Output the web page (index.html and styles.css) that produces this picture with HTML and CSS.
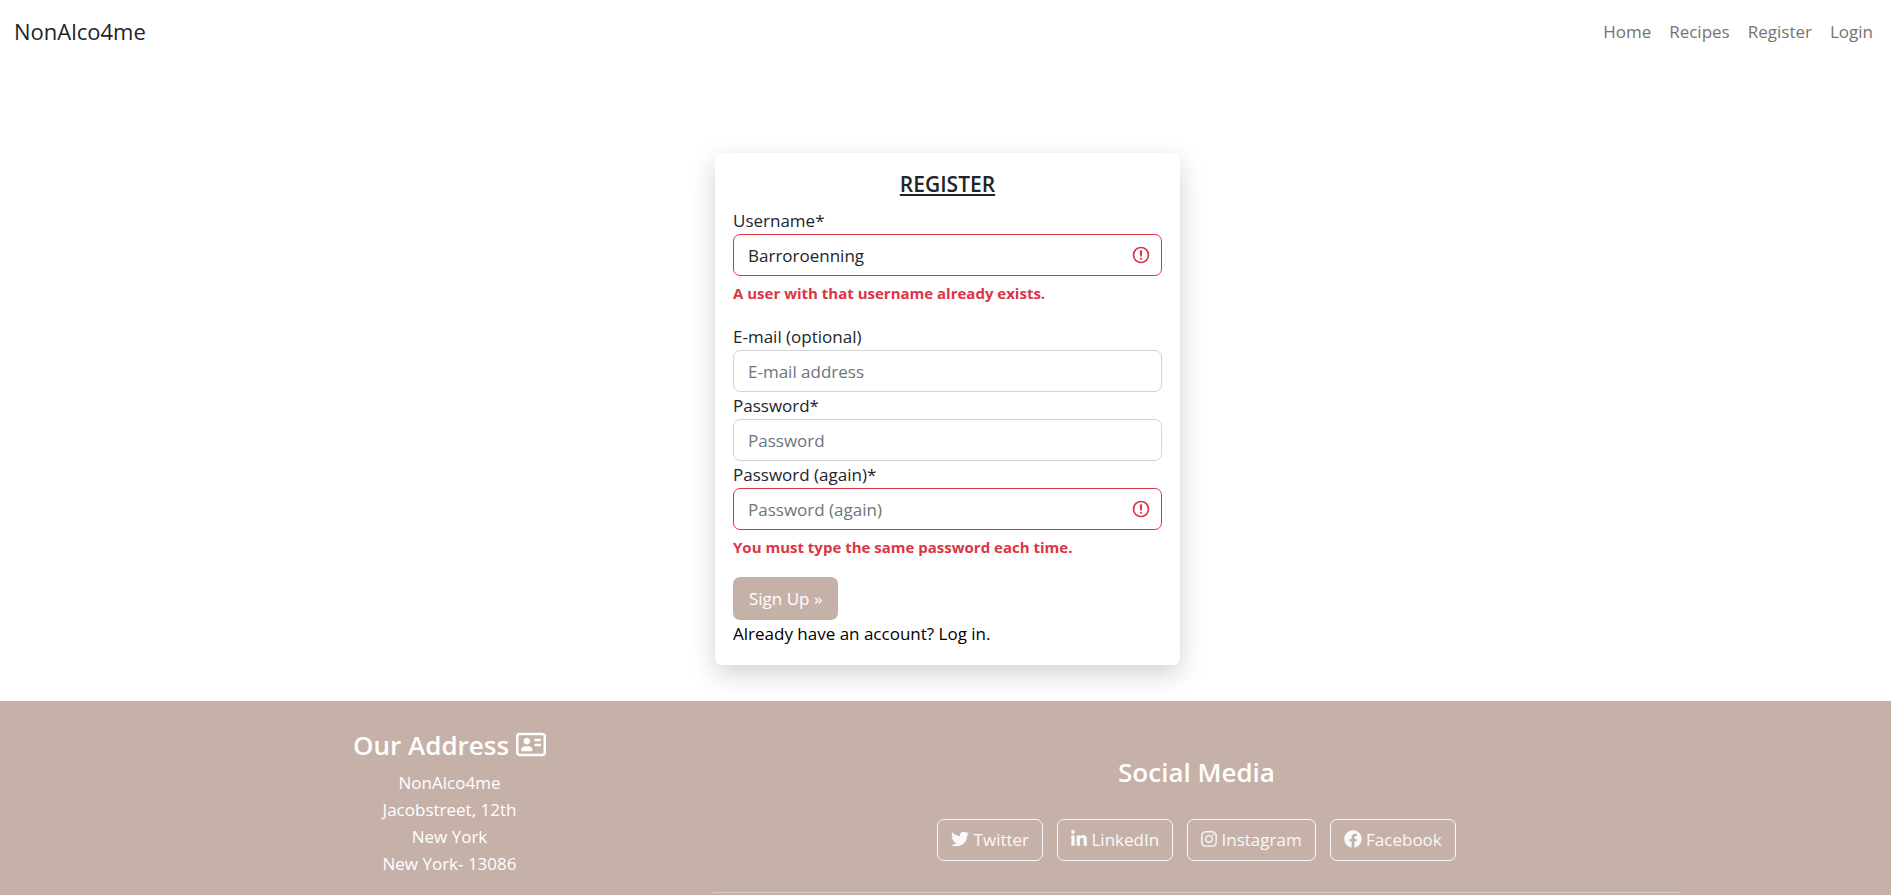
FILE: index.html
```html
<!DOCTYPE html>
<html lang="en">
<head>
<meta charset="utf-8">
<title>NonAlco4me - Register</title>
<link rel="stylesheet" href="styles.css">
</head>
<body>
<header class="navbar">
  <a class="brand" href="#">NonAlco4me</a>
  <nav class="nav-links">
    <a href="#">Home</a>
    <a href="#">Recipes</a>
    <a href="#">Register</a>
    <a href="#">Login</a>
  </nav>
</header>

<main class="main">
  <section class="card">
    <h1 class="card-title">REGISTER</h1>
    <form class="form">
      <div class="field has-error">
        <label for="username">Username*</label>
        <div class="control">
          <input class="invalid" id="username" type="text" value="Barroroenning">
          <svg class="error-icon" viewBox="0 0 12 12" aria-hidden="true"><circle cx="6" cy="6" r="4.5"/><path stroke-linejoin="round" d="M5.8 3.6h.4L6 6.5z"/><circle class="dot" cx="6" cy="8.2" r=".6"/></svg>
        </div>
        <p class="error">A user with that username already exists.</p>
      </div>
      <div class="field">
        <label for="email">E-mail (optional)</label>
        <input id="email" type="email" placeholder="E-mail address">
      </div>
      <div class="field">
        <label for="password1">Password*</label>
        <input id="password1" type="password" placeholder="Password">
      </div>
      <div class="field has-error">
        <label for="password2">Password (again)*</label>
        <div class="control">
          <input class="invalid" id="password2" type="password" placeholder="Password (again)">
          <svg class="error-icon" viewBox="0 0 12 12" aria-hidden="true"><circle cx="6" cy="6" r="4.5"/><path stroke-linejoin="round" d="M5.8 3.6h.4L6 6.5z"/><circle class="dot" cx="6" cy="8.2" r=".6"/></svg>
        </div>
        <p class="error">You must type the same password each time.</p>
      </div>
      <button class="submit" type="submit">Sign Up »</button>
    </form>
    <a class="login-link" href="#">Already have an account? Log in.</a>
  </section>
</main>

<footer class="footer">
  <div class="footer-inner">
    <section class="address">
      <h2>Our Address <svg class="icon-card" viewBox="0 0 576 512" aria-hidden="true"><path d="M512 80c8.800 0 16 7.200 16 16V416c0 8.800-7.200 16-16 16H64c-8.800 0-16-7.200-16-16V96c0-8.800 7.200-16 16-16H512zM64 32C28.700 32 0 60.700 0 96V416c0 35.300 28.700 64 64 64H512c35.300 0 64-28.700 64-64V96c0-35.300-28.700-64-64-64H64zM208 256c35.300 0 64-28.700 64-64s-28.700-64-64-64s-64 28.700-64 64s28.700 64 64 64zm-32 32c-44.200 0-80 35.800-80 80c0 8.800 7.200 16 16 16H304c8.800 0 16-7.200 16-16c0-44.200-35.800-80-80-80H176zM376 144c-13.300 0-24 10.700-24 24s10.700 24 24 24h80c13.300 0 24-10.700 24-24s-10.700-24-24-24H376zm0 96c-13.300 0-24 10.700-24 24s10.700 24 24 24h80c13.300 0 24-10.700 24-24s-10.700-24-24-24H376z"/></svg></h2>
      <address>NonAlco4me<br>Jacobstreet, 12th<br>New York<br>New York- 13086</address>
    </section>
    <section class="social">
      <h2>Social Media</h2>
      <div class="social-links">
        <a href="#"><svg class="icon" viewBox="0 0 512 512" aria-hidden="true"><path d="M459.370 151.716c.325 4.548.325 9.097.325 13.645 0 138.720-105.583 298.558-298.558 298.558-59.452 0-114.680-17.219-161.137-47.106 8.447.974 16.568 1.299 25.340 1.299 49.055 0 94.213-16.568 130.274-44.832-46.132-.975-84.792-31.188-98.112-72.772 6.498.974 12.995 1.624 19.818 1.624 9.421 0 18.843-1.300 27.614-3.573-48.081-9.747-84.143-51.980-84.143-102.985v-1.299c13.969 7.797 30.214 12.670 47.431 13.319-28.264-18.843-46.781-51.005-46.781-87.391 0-19.492 5.197-37.360 14.294-52.954 51.655 63.675 129.300 105.258 216.365 109.807-1.624-7.797-2.599-15.918-2.599-24.040 0-57.828 46.782-104.934 104.934-104.934 30.213 0 57.502 12.670 76.670 33.137 23.715-4.548 46.456-13.320 66.599-25.340-7.798 24.366-24.366 44.833-46.132 57.827 21.117-2.273 41.584-8.122 60.426-16.243-14.292 20.791-32.161 39.308-52.628 54.253z"/></svg> Twitter</a>
        <a href="#"><svg class="icon narrow" viewBox="0 0 448 512" aria-hidden="true"><path d="M100.280 448H7.400V148.900h92.880zM53.790 108.100C24.090 108.100 0 83.500 0 53.800a53.790 53.790 0 0 1 107.580 0c0 29.700-24.100 54.300-53.790 54.300zM447.900 448h-92.680V302.400c0-34.700-.7-79.200-48.290-79.200-48.290 0-55.690 37.700-55.690 76.700V448h-92.780V148.900h89.080v40.800h1.300c12.400-23.500 42.690-48.300 87.880-48.300 94 0 111.280 61.900 111.280 142.300V448z"/></svg> LinkedIn</a>
        <a href="#"><svg class="icon narrow" viewBox="0 0 448 512" aria-hidden="true"><path d="M224.100 141c-63.600 0-114.900 51.300-114.900 114.900s51.300 114.900 114.900 114.900S339 319.500 339 255.900 287.700 141 224.100 141zm0 189.600c-41.100 0-74.700-33.500-74.700-74.700s33.500-74.700 74.700-74.700 74.700 33.500 74.700 74.700-33.600 74.700-74.700 74.700zm146.400-194.300c0 14.900-12 26.800-26.800 26.800-14.900 0-26.800-12-26.800-26.800s12-26.800 26.800-26.800 26.800 12 26.800 26.800zm76.100 27.200c-1.700-35.900-9.900-67.700-36.200-93.900-26.200-26.200-58-34.400-93.900-36.200-37-2.100-147.900-2.100-184.900 0-35.800 1.700-67.600 9.900-93.900 36.100s-34.400 58-36.200 93.900c-2.100 37-2.100 147.900 0 184.900 1.700 35.900 9.900 67.700 36.200 93.900s58 34.400 93.900 36.200c37 2.100 147.900 2.100 184.900 0 35.900-1.700 67.700-9.900 93.900-36.200 26.200-26.200 34.400-58 36.200-93.900 2.100-37 2.100-147.800 0-184.800zM398.800 388c-7.800 19.600-22.900 34.700-42.600 42.600-29.500 11.700-99.500 9-132.100 9s-102.700 2.600-132.100-9c-19.600-7.800-34.700-22.900-42.600-42.600-11.700-29.500-9-99.500-9-132.100s-2.600-102.700 9-132.100c7.800-19.600 22.900-34.700 42.600-42.600 29.500-11.700 99.500-9 132.100-9s102.700-2.600 132.100 9c19.600 7.800 34.700 22.900 42.600 42.600 11.700 29.500 9 99.500 9 132.100s2.700 102.700-9 132.100z"/></svg> Instagram</a>
        <a href="#"><svg class="icon" viewBox="0 0 512 512" aria-hidden="true"><path d="M504 256C504 119 393 8 256 8S8 119 8 256c0 123.780 90.690 226.380 209.250 245V327.690h-63V256h63v-54.640c0-62.150 37-96.480 93.670-96.480 27.140 0 55.520 4.840 55.520 4.840v61h-31.280c-30.800 0-40.410 19.120-40.410 38.730V256h68.780l-11 71.690h-57.780V501C413.310 482.380 504 379.780 504 256z"/></svg> Facebook</a>
      </div>
      <hr>
    </section>
  </div>
</footer>
</body>
</html>
```
FILE: styles.css
```css
*, *::before, *::after {
  box-sizing: border-box;
}

body {
  margin: 0;
  min-height: 100vh;
  display: flex;
  flex-direction: column;
  background: #fff;
  color: #212529;
  font-family: "Open Sans", "Noto Sans", sans-serif;
  font-size: 17px;
  line-height: 27px;
}

a {
  color: inherit;
  text-decoration: none;
}

h1, h2, p {
  margin: 0;
}

.navbar {
  display: flex;
  align-items: center;
  justify-content: space-between;
  padding: 13px 18px 15px 14px;
}

.brand {
  font-size: 22px;
  line-height: 36px;
}

.nav-links {
  display: flex;
  gap: 18px;
  color: #737373;
}

.main {
  display: flex;
  justify-content: center;
  padding: 89px 0 36px 4px;
}

.card {
  width: 25%;
  min-width: 320px;
  max-width: 465px;
  padding: 18px;
  border-radius: 7px;
  background: #fff;
  box-shadow: 0 9px 27px rgba(0, 0, 0, 0.18);
}

.card-title {
  margin-bottom: 9px;
  font-size: 21px;
  font-weight: 600;
  line-height: 27px;
  text-align: center;
  text-decoration: underline;
}

.has-error {
  margin-bottom: 18px;
}

label {
  display: block;
}

.control {
  position: relative;
}

input {
  display: block;
  width: 100%;
  height: 42px;
  padding: 6px 14px;
  border: 1px solid #ced4da;
  border-radius: 7px;
  background: #fff;
  color: #212529;
  font: inherit;
}

input::placeholder {
  color: #6c757d;
  opacity: 1;
}

.invalid {
  padding-right: 44px;
  border-color: #dc3545;
}

.error-icon {
  position: absolute;
  top: 11px;
  right: 11px;
  width: 20px;
  height: 20px;
  fill: none;
  stroke: #dc3545;
}

.error-icon .dot {
  fill: #dc3545;
  stroke: none;
}

.error {
  margin-top: 5px;
  color: #dc3545;
  font-size: 15px;
  font-weight: 700;
  line-height: 24px;
}

.submit {
  display: block;
  padding: 8px 16px;
  border: 0;
  border-radius: 7px;
  background: #c6b1a8;
  color: #fff;
  font: inherit;
}

.login-link {
  display: block;
  color: #000;
}

.footer {
  flex: 1;
  padding-left: 4px;
  background: #c6b1a8;
  color: #fff;
}

.footer-inner {
  display: grid;
  grid-template-columns: 1fr 2fr;
  width: 80%;
  max-width: 1494px;
  min-width: 960px;
  margin: 0 auto;
  text-align: center;
}

.footer h2 {
  font-size: 26px;
  font-weight: 600;
  line-height: 32px;
}

.address {
  padding: 28px 14px 0;
}

.address h2 {
  margin-bottom: 8px;
}

address {
  font-style: normal;
}

.icon-card {
  width: 30px;
  height: 27px;
  fill: currentColor;
  vertical-align: -3px;
}

.social {
  padding: 55px 14px 0;
}

.social-links {
  display: flex;
  justify-content: center;
  gap: 14px;
  margin: 31px 0;
}

.social-links a {
  padding: 6px 13px 7px;
  border: 1px solid #f8f9fa;
  border-radius: 7px;
  color: #f8f9fa;
}

.icon {
  width: 18px;
  height: 18px;
  fill: currentColor;
  vertical-align: -2px;
}

.narrow {
  width: 16px;
}

hr {
  height: 1px;
  margin: 0;
  border: 0;
  background: #d8c9c2;
}
```
